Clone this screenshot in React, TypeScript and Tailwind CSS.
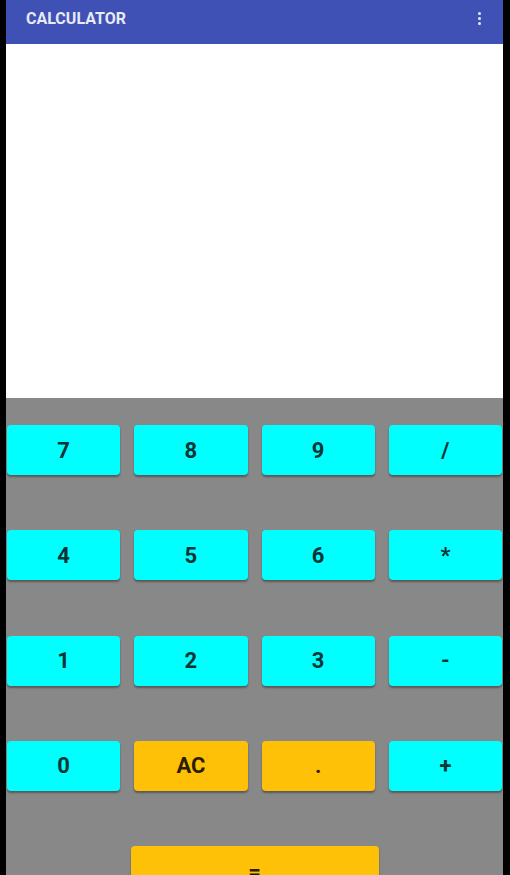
import React from 'react';

type Key = { label: string; kind: 'num' | 'op' };

const rows: Key[][] = [
  [
    { label: '7', kind: 'num' },
    { label: '8', kind: 'num' },
    { label: '9', kind: 'num' },
    { label: '/', kind: 'num' },
  ],
  [
    { label: '4', kind: 'num' },
    { label: '5', kind: 'num' },
    { label: '6', kind: 'num' },
    { label: '*', kind: 'num' },
  ],
  [
    { label: '1', kind: 'num' },
    { label: '2', kind: 'num' },
    { label: '3', kind: 'num' },
    { label: '-', kind: 'num' },
  ],
  [
    { label: '0', kind: 'num' },
    { label: 'AC', kind: 'op' },
    { label: '.', kind: 'op' },
    { label: '+', kind: 'num' },
  ],
];

function CalcButton({ label, kind }: Key) {
  const color =
    kind === 'op'
      ? 'bg-[#ffc107] text-[#2a1d00]'
      : 'bg-[#00ffff] text-[#0b3434]';
  return (
    <button
      className={`h-[50px] rounded-[4px] text-[22px] font-bold shadow-[0_2px_2px_rgba(0,0,0,0.35)] ${color}`}
    >
      {label}
    </button>
  );
}

export default function App() {
  return (
    <div
      className="flex h-[875px] w-[510px] overflow-hidden bg-black pl-[6px] pr-[7px]"
      style={{ fontFamily: 'Roboto, "Liberation Sans", sans-serif' }}
    >
      <div className="flex flex-1 flex-col">
        {/* app bar */}
        <div className="flex h-[44px] shrink-0 items-center justify-between bg-[#3f51b5] pb-[7px] pl-[20px] pr-[22px] shadow-[0_1px_2px_rgba(0,0,0,0.3)]">
          <span className="text-[16px] font-bold text-[#e8eaf6]">CALCULATOR</span>
          <div className="flex flex-col gap-[2px]">
            <span className="h-[3px] w-[3px] rounded-full bg-[#e8eaf6]" />
            <span className="h-[3px] w-[3px] rounded-full bg-[#e8eaf6]" />
            <span className="h-[3px] w-[3px] rounded-full bg-[#e8eaf6]" />
          </div>
        </div>

        {/* display */}
        <div className="h-[354px] shrink-0 bg-white" />

        {/* keypad */}
        <div className="flex flex-1 flex-col gap-[55.33px] bg-[#888888] px-px pt-[27px]">
          {rows.map((row, i) => (
            <div key={i} className="grid grid-cols-4 gap-[14px]">
              {row.map((k) => (
                <CalcButton key={k.label} {...k} />
              ))}
            </div>
          ))}
          <div className="flex justify-center">
            <button className="h-[50px] w-[248px] rounded-[4px] bg-[#ffc107] text-[22px] font-bold text-[#2a1d00] shadow-[0_2px_2px_rgba(0,0,0,0.35)]">
              =
            </button>
          </div>
        </div>
      </div>
    </div>
  );
}
